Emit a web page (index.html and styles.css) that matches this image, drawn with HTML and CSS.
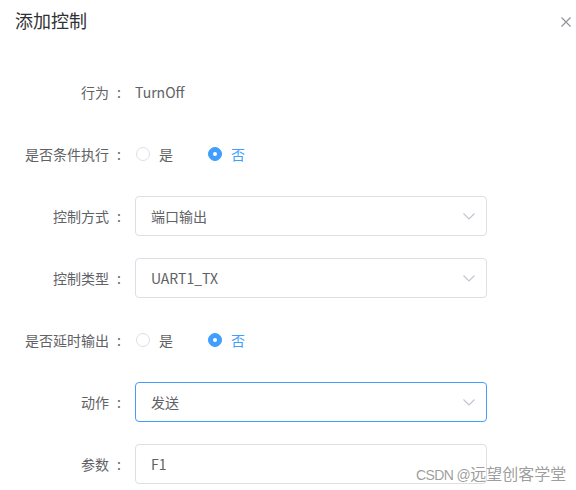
FILE: index.html
```html
<!DOCTYPE html>
<html lang="zh">
<head>
<meta charset="utf-8">
<link rel="stylesheet" href="styles.css">
</head>
<body>
<div class="dialog">
  <div class="header">
    <span class="title">添加控制</span>
    <button class="close" aria-label="close">
      <svg width="10" height="10" viewBox="0 0 10 10"><path d="M0.5 0.5 L9.5 9.5 M9.5 0.5 L0.5 9.5" stroke="#909399" stroke-width="1.2" fill="none"/></svg>
    </button>
  </div>
  <form class="form">
    <div class="item">
      <label class="label">行为<span class="colon">:</span></label>
      <div class="content"><span class="text">TurnOff</span></div>
    </div>
    <div class="item">
      <label class="label">是否条件执行<span class="colon">:</span></label>
      <div class="content">
        <span class="radio"><span class="dot"></span><span class="rlabel">是</span></span>
        <span class="radio checked"><span class="dot"></span><span class="rlabel">否</span></span>
      </div>
    </div>
    <div class="item">
      <label class="label">控制方式<span class="colon">:</span></label>
      <div class="content">
        <div class="select"><span>端口输出</span><svg class="arrow" width="12" height="7" viewBox="0 0 12 7"><path d="M0.5 0.5 L6 6 L11.5 0.5" stroke="#c0c4cc" stroke-width="1.1" fill="none"/></svg></div>
      </div>
    </div>
    <div class="item">
      <label class="label">控制类型<span class="colon">:</span></label>
      <div class="content">
        <div class="select"><span>UART1_TX</span><svg class="arrow" width="12" height="7" viewBox="0 0 12 7"><path d="M0.5 0.5 L6 6 L11.5 0.5" stroke="#c0c4cc" stroke-width="1.1" fill="none"/></svg></div>
      </div>
    </div>
    <div class="item">
      <label class="label">是否延时输出<span class="colon">:</span></label>
      <div class="content">
        <span class="radio"><span class="dot"></span><span class="rlabel">是</span></span>
        <span class="radio checked"><span class="dot"></span><span class="rlabel">否</span></span>
      </div>
    </div>
    <div class="item">
      <label class="label">动作<span class="colon">:</span></label>
      <div class="content">
        <div class="select focus"><span>发送</span><svg class="arrow" width="12" height="7" viewBox="0 0 12 7"><path d="M0.5 0.5 L6 6 L11.5 0.5" stroke="#c0c4cc" stroke-width="1.1" fill="none"/></svg></div>
      </div>
    </div>
    <div class="item">
      <label class="label">参数<span class="colon">:</span></label>
      <div class="content">
        <div class="select"><span>F1</span></div>
      </div>
    </div>
  </form>
  <div class="watermark"><span class="wm-latin">CSDN @</span><span class="wm-cjk">远望创客学堂</span></div>
</div>
</body>
</html>
```
FILE: styles.css
```css
html, body {
  margin: 0;
  padding: 0;
  background: #fff;
}
body {
  font-family: "Noto Sans CJK SC", "Microsoft YaHei", "Noto Sans", sans-serif;
  font-size: 14px;
  color: #606266;
}
.dialog {
  position: relative;
  width: 576px;
  height: 490px;
  overflow: hidden;
}
.header {
  display: flex;
  justify-content: space-between;
  align-items: center;
  padding: 8px 5px 0 15px;
  height: 24px;
}
.title {
  font-size: 18px;
  line-height: 24px;
  color: #303133;
}
.close {
  border: 0;
  background: none;
  padding: 0;
  width: 10px;
  height: 10px;
  margin-top: 3px;
  display: flex;
}
.form {
  margin: 40px 0 0 0;
  padding: 0;
}
.item {
  display: flex;
  align-items: center;
  height: 40px;
  margin-bottom: 22px;
}
.label {
  width: 123px;
  padding-right: 12px;
  text-align: right;
  line-height: 40px;
  color: #606266;
  flex: none;
}
.colon {
  display: inline-block;
  box-sizing: border-box;
  width: 14px;
  padding-left: 8px;
  text-align: left;
}
.content {
  display: flex;
  align-items: center;
  line-height: 40px;
}
.text {
  color: #606266;
}
.radio {
  display: inline-flex;
  align-items: center;
  margin-right: 34px;
  color: #606266;
}
.dot {
  width: 14px;
  height: 14px;
  box-sizing: border-box;
  border: 1px solid #dcdfe6;
  border-radius: 50%;
  background: #fff;
  margin-left: 1px;
}
.radio.checked .dot {
  border-color: #409eff;
  background: #409eff;
  position: relative;
}
.radio.checked .dot::after {
  content: "";
  position: absolute;
  width: 4px;
  height: 4px;
  border-radius: 50%;
  background: #fff;
  left: 4px;
  top: 4px;
}
.rlabel {
  padding-left: 9px;
}
.radio.checked .rlabel {
  color: #409eff;
}
.select {
  box-sizing: border-box;
  width: 352px;
  height: 40px;
  border: 1px solid #dcdfe6;
  border-radius: 4px;
  padding: 0 15px;
  display: flex;
  align-items: center;
  justify-content: space-between;
  color: #606266;
}
.select.focus {
  border-color: #409eff;
}
.arrow {
  margin-right: -4px;
  margin-top: 1px;
}
.watermark {
  position: absolute;
  left: 416px;
  top: 462px;
  display: flex;
  align-items: baseline;
  white-space: nowrap;
  line-height: 22px;
  color: rgba(140, 140, 140, 0.85);
}
.wm-latin {
  font-family: "Liberation Sans", sans-serif;
  font-size: 14px;
  letter-spacing: -0.6px;
}
.wm-cjk {
  font-family: "Noto Sans CJK SC", sans-serif;
  font-size: 16px;
}
```
